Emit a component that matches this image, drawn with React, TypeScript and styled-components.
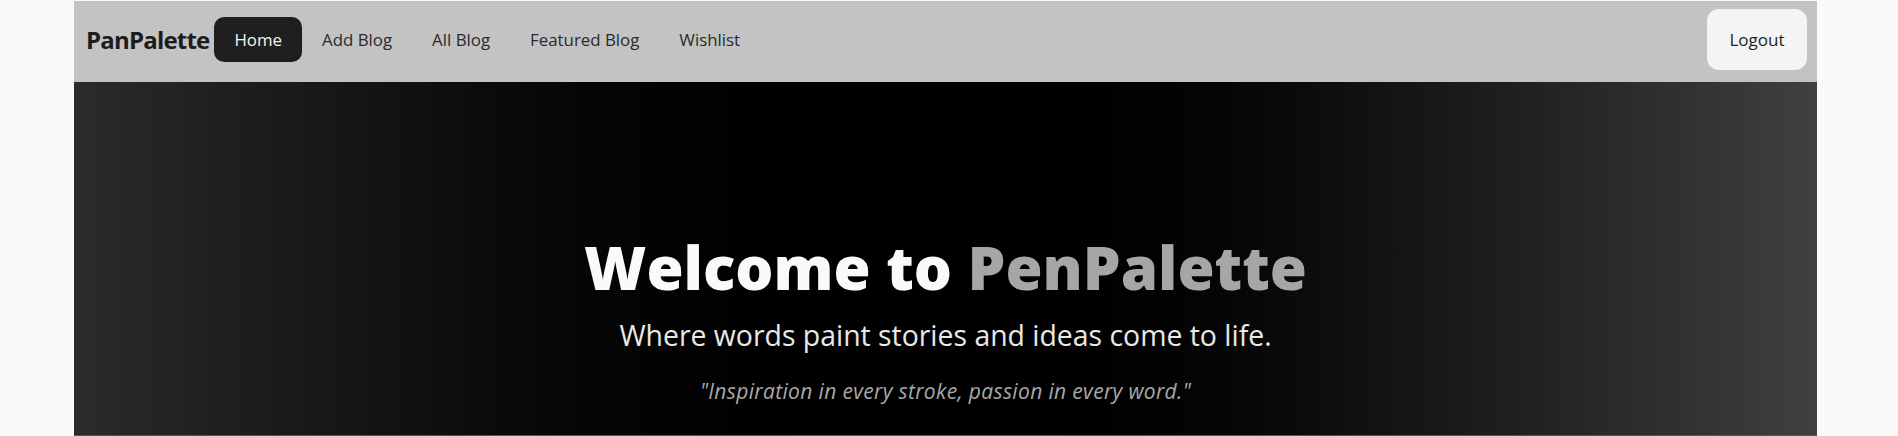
import React from "react";
import styled, { createGlobalStyle } from "styled-components";

const Global = createGlobalStyle`
  html, body { margin: 0; padding: 0; background: #fafafa; }
  body { font-family: "Open Sans", "Noto Sans", sans-serif; color: #1f1f1f; }
  * { box-sizing: border-box; }
`;

const Page = styled.div`
  padding: 1px 0 0 74px;
  height: 436px;
  overflow: hidden;
`;

const Shell = styled.div`
  width: 1743px;
`;

const Navbar = styled.nav`
  display: flex;
  align-items: center;
  min-height: 81px;
  padding: 8px 10px 12px 12px;
  background: #c3c3c3;
`;

const Brand = styled.a`
  font-size: 24px;
  font-weight: 700;
  letter-spacing: -0.8px;
  color: #1c1c1c;
  text-decoration: none;
`;

const Menu = styled.ul`
  display: flex;
  align-items: center;
  list-style: none;
  margin: 0 0 0 5px;
  padding: 0;
`;

const NavLink = styled.a<{ $active?: boolean }>`
  display: flex;
  align-items: center;
  height: 45px;
  padding: 0 20px;
  border-radius: 10px;
  font-size: 16.85px;
  text-decoration: none;
  color: ${(p) => (p.$active ? "#f5f5f5" : "#2a2a2a")};
  background: ${(p) => (p.$active ? "#1f1f1f" : "transparent")};
`;

const Spacer = styled.div`
  flex: 1;
`;

const LogoutButton = styled.button`
  height: 61px;
  width: 100px;
  border: none;
  border-radius: 12px;
  background: #f4f4f4;
  color: #1f1f1f;
  font-family: inherit;
  font-size: 17px;
`;

const Hero = styled.section`
  height: 354px;
  background: linear-gradient(in oklab to right, #2b2b2b 0%, #000000 50%, #404040 100%);
  border-bottom: 1px solid #555555;
  display: flex;
  flex-direction: column;
  align-items: center;
  padding-top: 155px;
  text-align: center;
`;

const Title = styled.h1`
  margin: 0;
  font-size: 60px;
  line-height: 60px;
  font-weight: 800;
  color: #fafafa;
`;

const Accent = styled.span`
  color: #a6a6a6;
`;

const Subtitle = styled.p`
  margin: 20px 0 0;
  font-size: 28.4px;
  line-height: 36px;
  color: #e8e8e8;
`;

const Quote = styled.p`
  margin: 24px 0 0;
  font-size: 21px;
  line-height: 28px;
  letter-spacing: 0.35px;
  font-style: italic;
  color: #a8a8a8;
`;

const links = ["Home", "Add Blog", "All Blog", "Featured Blog", "Wishlist"];

export default function App() {
  return (
    <>
      <Global />
      <Page>
        <Shell>
          <Navbar>
            <Brand href="#">PanPalette</Brand>
            <Menu>
              {links.map((l, i) => (
                <li key={l}>
                  <NavLink href="#" $active={i === 0}>
                    {l}
                  </NavLink>
                </li>
              ))}
            </Menu>
            <Spacer />
            <LogoutButton>Logout</LogoutButton>
          </Navbar>
          <Hero>
            <Title>
              Welcome to <Accent>PenPalette</Accent>
            </Title>
            <Subtitle>Where words paint stories and ideas come to life.</Subtitle>
            <Quote>"Inspiration in every stroke, passion in every word."</Quote>
          </Hero>
        </Shell>
      </Page>
    </>
  );
}
